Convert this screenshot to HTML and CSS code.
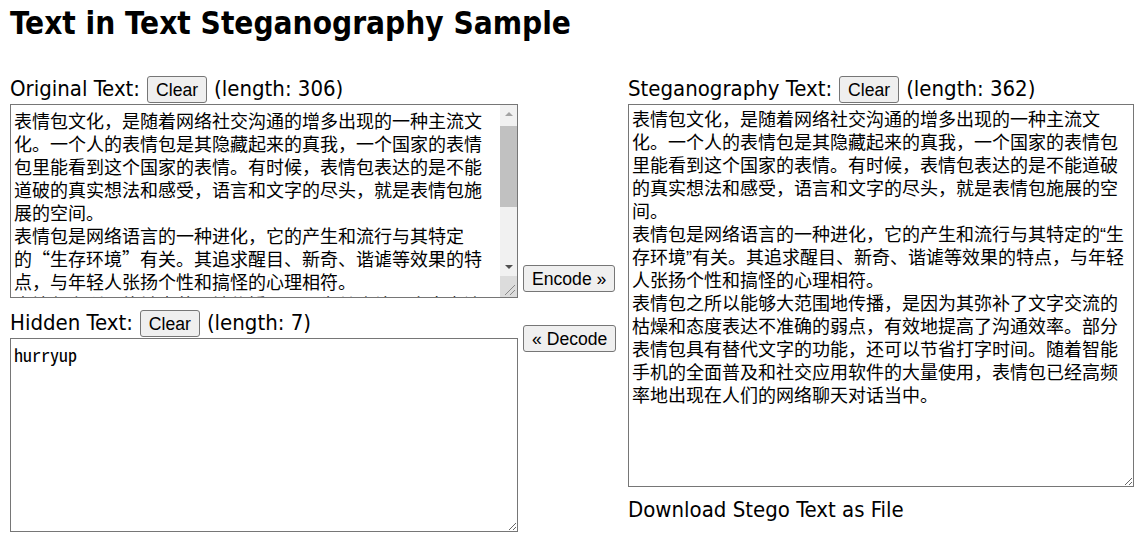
FILE: index.html
```html
<!DOCTYPE html>
<html lang="zh-CN">
<head>
<meta charset="utf-8">
<title>Text in Text Steganography Sample</title>
<link rel="stylesheet" href="styles.css">
</head>
<body>
<h1 class="title">Text in Text Steganography Sample</h1>
<div class="app">
  <div class="col col-left">
    <div class="label-row">
      <span class="label">Original Text:</span>
      <button class="btn" type="button">Clear</button>
      <span class="label">(length: 306)</span>
    </div>
    <div class="ta-wrap">
      <textarea class="ta ta-orig">表情包文化，是随着网络社交沟通的增多出现的一种主流文化。一个人的表情包是其隐藏起来的真我，一个国家的表情包里能看到这个国家的表情。有时候，表情包表达的是不能道破的真实想法和感受，语言和文字的尽头，就是表情包施展的空间。
表情包是网络语言的一种进化，它的产生和流行与其特定的&#8288;“生存环境”有关。其追求醒目、新奇、谐谑等效果的特点，与年轻人张扬个性和搞怪的心理相符。
表情包之所以能够大范围地传播，是因为其弥补了文字交流的枯燥和态度表达不准确的弱点，有效地提高了沟通效率。部分表情包具有替代文字的功能，还可以节省打字时间。随着智能手机的全面普及和社交应用软件的大量使用，表情包已经高频率地出现在人们的网络聊天对话当中。</textarea>
      <div class="fake-scroll" aria-hidden="true">
        <div class="sb-btn"><svg width="8" height="5" viewBox="0 0 8 5"><polygon points="0,5 4,1 8,5" fill="#a3a3a3"/></svg></div>
        <div class="sb-track"><div class="sb-thumb"></div></div>
        <div class="sb-btn"><svg width="8" height="5" viewBox="0 0 8 5"><polygon points="0,0 8,0 4,4" fill="#505050"/></svg></div>
        <div class="sb-corner"><svg width="17" height="21" viewBox="0 0 17 21"><line x1="15" y1="9" x2="5" y2="19" stroke="#8a8a8a" stroke-width="1"/><line x1="15" y1="14" x2="10" y2="19" stroke="#8a8a8a" stroke-width="1"/></svg></div>
      </div>
    </div>
    <div class="label-row label-row-hidden">
      <span class="label">Hidden Text:</span>
      <button class="btn" type="button">Clear</button>
      <span class="label">(length: 7)</span>
    </div>
    <textarea class="ta ta-hidden">hurryup</textarea>
  </div>
  <div class="col col-mid">
    <button class="btn" type="button">Encode »</button>
    <button class="btn" type="button">« Decode</button>
  </div>
  <div class="col col-right">
    <div class="label-row">
      <span class="label">Steganography Text:</span>
      <button class="btn" type="button">Clear</button>
      <span class="label">(length: 362)</span>
    </div>
    <textarea class="ta ta-stego">表情包文化，是随着网络社交沟通的增多出现的一种主流文化。一个人的表情包是其隐藏起来的真我，一个国家的表情包里能看到这个国家的表情。有时候，表情包表达的是不能道破的真实想法和感受，语言和文字的尽头，就是表情包施展的空间。
表情包是网络语言的一种进化，它的产生和流行与其特定的“生存环境”有关。其追求醒目、新奇、谐谑等效果的特点，与年轻人张扬个性和搞怪的心理相符。
表情包之所以能够大范围地传播，是因为其弥补了文字交流的枯燥和态度表达不准确的弱点，有效地提高了沟通效率。部分表情包具有替代文字的功能，还可以节省打字时间。随着智能手机的全面普及和社交应用软件的大量使用，表情包已经高频率地出现在人们的网络聊天对话当中。</textarea>
    <a class="download" href="#">Download Stego Text as File</a>
  </div>
</div>
</body>
</html>
```

FILE: styles.css
```css
body {
  margin: 0;
  padding: 0 0 0 10px;
  background: #fff;
  color: #000;
  font-family: "DejaVu Sans Condensed", "DejaVu Sans", sans-serif;
}

.title {
  margin: 0;
  padding-top: 4px;
  font-size: 31.3px;
  font-weight: bold;
  line-height: 38px;
}

.app {
  display: flex;
  margin-top: 34px;
}

.col {
  display: flex;
  flex-direction: column;
  flex-shrink: 0;
}

.col-left {
  width: 508px;
}

.col-mid {
  box-sizing: border-box;
  width: 110px;
  padding-left: 5px;
  padding-top: 189px;
  gap: 33px;
  align-items: flex-start;
}

.col-right {
  width: 506px;
}

.label-row {
  display: flex;
  align-items: baseline;
  gap: 7px;
  height: 28px;
}

.label-row-hidden {
  margin-top: 12px;
}

.label {
  font-size: 22px;
  line-height: 26px;
}

.btn {
  font-family: "Liberation Sans", Arial, sans-serif;
  font-size: 17.6px;
  line-height: 20px;
  padding: 3px 8px 2px;
  margin: 0;
  color: #000;
  background: #efefef;
  border: 1px solid #767676;
  border-radius: 3px;
}

.ta-wrap {
  position: relative;
  width: 508px;
  height: 194px;
}

.ta {
  box-sizing: border-box;
  display: block;
  margin: 0;
  padding: 4px 5px 2px 3px;
  border: 1px solid #767676;
  color: #000;
  background: #fff;
  font-family: "Noto Sans Mono CJK SC", "Noto Sans CJK SC", monospace;
  font-size: 18px;
  line-height: 23px;
}

.ta-orig {
  width: 508px;
  height: 194px;
  padding-right: 22px;
  overflow: hidden;
}

.ta-hidden {
  width: 508px;
  height: 194px;
}

.ta-stego {
  width: 506px;
  height: 383px;
  font-family: "Liberation Sans", "Noto Sans CJK SC", sans-serif;
}

.fake-scroll {
  position: absolute;
  top: 1px;
  right: 1px;
  bottom: 1px;
  width: 17px;
  display: flex;
  flex-direction: column;
  background: #f1f1f1;
}

.sb-btn {
  height: 17px;
  display: flex;
  align-items: center;
  justify-content: center;
}

.sb-track {
  flex: 1;
  padding-top: 4px;
}

.sb-thumb {
  height: 81px;
  background: #c1c1c1;
}

.sb-corner {
  height: 21px;
  background: #dcdcdc;
  display: flex;
}

.download {
  margin-top: 10px;
  font-size: 22px;
  line-height: 26px;
  color: #000;
  text-decoration: none;
}
```
